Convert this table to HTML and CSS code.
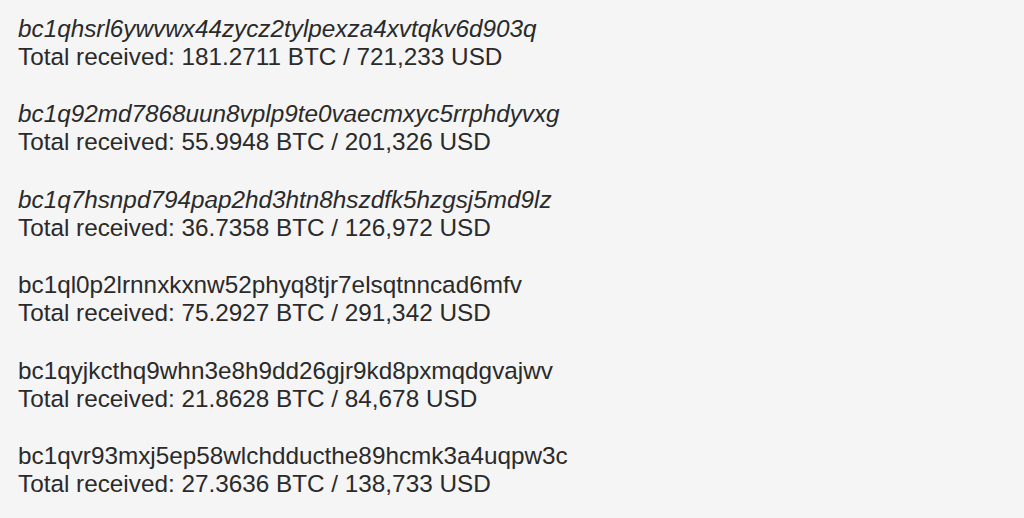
FILE: index.html
```html
<!DOCTYPE html>
<html lang="en">
<head>
  <meta charset="UTF-8" />
  <title>Addresses</title>
  <link rel="stylesheet" href="styles.css">
</head>
<body>
  <div class="list">
    <div class="entry">
      <div class="addr italic">bc1qhsrl6ywvwx44zycz2tylpexza4xvtqkv6d903q</div>
      <div class="total">Total received: 181.2711 BTC / 721,233 USD</div>
    </div>
    <div class="entry">
      <div class="addr italic">bc1q92md7868uun8vplp9te0vaecmxyc5rrphdyvxg</div>
      <div class="total">Total received: 55.9948 BTC / 201,326 USD</div>
    </div>
    <div class="entry">
      <div class="addr italic">bc1q7hsnpd794pap2hd3htn8hszdfk5hzgsj5md9lz</div>
      <div class="total">Total received: 36.7358 BTC / 126,972 USD</div>
    </div>
    <div class="entry">
      <div class="addr">bc1ql0p2lrnnxkxnw52phyq8tjr7elsqtnncad6mfv</div>
      <div class="total">Total received: 75.2927 BTC / 291,342 USD</div>
    </div>
    <div class="entry">
      <div class="addr">bc1qyjkcthq9whn3e8h9dd26gjr9kd8pxmqdgvajwv</div>
      <div class="total">Total received: 21.8628 BTC / 84,678 USD</div>
    </div>
    <div class="entry">
      <div class="addr">bc1qvr93mxj5ep58wlchdducthe89hcmk3a4uqpw3c</div>
      <div class="total">Total received: 27.3636 BTC / 138,733 USD</div>
    </div>
  </div>
</body>
</html>
```

FILE: styles.css
```css
body {
  margin: 0;
  background: #f5f5f5;
  color: #2a2a2a;
  font-family: Arial, "Liberation Sans", Helvetica, sans-serif;
  font-size: 24.3px;
  line-height: 28px;
}

.list {
  display: flex;
  flex-direction: column;
  gap: 29.4px;
  padding: 15px 18px;
}

.italic {
  font-style: italic;
}
```
